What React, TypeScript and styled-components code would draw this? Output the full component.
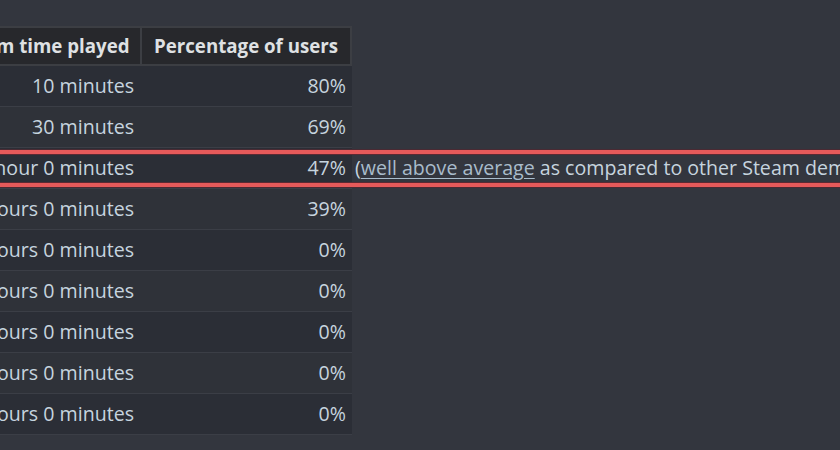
import React from "react";
import styled, { createGlobalStyle } from "styled-components";

const Global = createGlobalStyle`
  html, body { margin: 0; padding: 0; background: #33363e; overflow: hidden; }
  body { font-family: "Open Sans", "Liberation Sans", Arial, sans-serif; }
`;

const Page = styled.div`
  width: 840px;
  height: 450px;
  overflow: hidden;
  padding-top: 26px;
  box-sizing: border-box;
`;

const Table = styled.div`
  margin-left: -90px;
  display: flex;
  flex-direction: column;
`;

const HeaderRow = styled.div`
  display: grid;
  grid-template-columns: 228px 208px;
  width: 442px;
  box-sizing: border-box;
  background: #3c3e43;
  padding: 2px;
  gap: 2px;
`;

const HeadCell = styled.div`
  background: #27282c;
  color: #dfe1e3;
  font-weight: 700;
  font-size: 18.7px;
  height: 36px;
  line-height: 36px;
  text-align: right;
  padding: 0 12px;
  white-space: nowrap;
`;

const Row = styled.div<{ $alt?: boolean }>`
  position: relative;
  display: grid;
  grid-template-columns: 230px 212px auto;
  height: 41px;
  --cell: ${(p) => (p.$alt ? "#2f3239" : "#2b2e36")};
`;

const Cell = styled.div`
  background: var(--cell);
  border-bottom: 1px solid #3b3e46;
  color: #c6d4df;
  font-size: 19.6px;
  line-height: 40px;
  text-align: right;
  padding: 0 6px;
  white-space: nowrap;
`;

const Note = styled.div`
  color: #c6d4df;
  font-size: 19.6px;
  line-height: 40px;
  white-space: nowrap;
  padding-left: 3px;
`;

const Link = styled.a`
  color: #a9bccb;
  text-decoration: underline;
  text-underline-offset: 3px;
`;

const Highlight = styled.div`
  position: absolute;
  left: -20px;
  right: -900px;
  top: 2px;
  bottom: 2px;
  border: 4px solid #e65a5a;
  box-shadow: inset 0 0 0 1px #5b2a33, 0 0 0 1px #4a2a33;
  pointer-events: none;
`;

const rows = [
  ["10 minutes", "80%"],
  ["30 minutes", "69%"],
  ["1 hour 0 minutes", "47%"],
  ["2 hours 0 minutes", "39%"],
  ["5 hours 0 minutes", "0%"],
  ["6 hours 0 minutes", "0%"],
  ["7 hours 0 minutes", "0%"],
  ["8 hours 0 minutes", "0%"],
  ["9 hours 0 minutes", "0%"],
];

export default function App() {
  return (
    <Page>
      <Global />
      <Table>
        <HeaderRow>
          <HeadCell>Minimum time played</HeadCell>
          <HeadCell>Percentage of users</HeadCell>
        </HeaderRow>
        {rows.map(([t, p], i) => (
          <Row key={i} $alt={i % 2 === 1}>
            <Cell>{t}</Cell>
            <Cell>{p}</Cell>
            {i === 2 ? (
              <Note>
                (<Link href="#">well above average</Link> as compared to other Steam demos)
              </Note>
            ) : (
              <div />
            )}
            {i === 2 && <Highlight />}
          </Row>
        ))}
      </Table>
    </Page>
  );
}
